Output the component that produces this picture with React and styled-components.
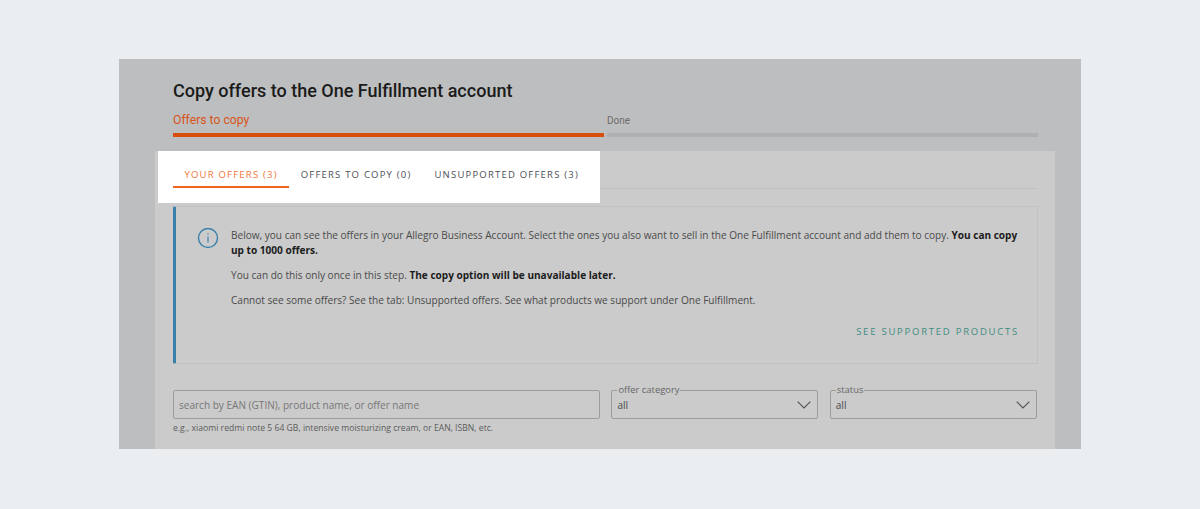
import styled, { createGlobalStyle } from 'styled-components';

const GlobalStyle = createGlobalStyle`
  html, body {
    margin: 0;
    background: #eaeef1;
  }
  * {
    box-sizing: border-box;
  }
`;

const Page = styled.div`
  width: 1200px;
  height: 509px;
  padding: 59px 119px 60px;
  overflow: hidden;
`;

const Frame = styled.div`
  width: 962px;
  height: 390px;
  padding: 19px 26px 0 36px;
  background: #bdbebf;
  overflow: hidden;
`;

const Title = styled.h1`
  margin: 0 0 0 18px;
  font: 500 18px/26px Roboto, sans-serif;
  color: #1b1b1b;
`;

const Stepper = styled.div`
  display: flex;
  gap: 3px;
  margin: 9px 17px 14px 18px;
`;

const Step = styled.div`
  flex: 1;
  border-bottom: 4px solid ${p => (p.$active ? '#d74f0a' : '#b0b0b0')};
  padding-bottom: 5px;
  font: 400 ${p => (p.$active ? '12.2px' : '10px')}/15px Roboto, sans-serif;
  color: ${p => (p.$active ? '#d9541a' : '#6d6d6d')};
`;

const Card = styled.div`
  height: 298px;
  padding: 0 17px 0 18px;
  background: #cbcbcb;
  font-family: 'Open Sans', sans-serif;
`;

const TabBar = styled.div`
  position: relative;
  display: flex;
  height: 38px;
  padding-top: 14px;
  border-bottom: 1px solid rgba(0, 0, 0, 0.06);
`;

// white spotlight laid over the dimmed page, behind the tab labels
const Spotlight = styled.div`
  position: absolute;
  top: 0;
  left: -15px;
  width: 442px;
  height: 52px;
  background: #fff;
`;

const Tab = styled.div`
  position: relative;
  height: 23px;
  padding: 3px 11.5px 0;
  margin-bottom: -1px;
  border-bottom: 2px solid ${p => (p.$active ? '#f0661f' : 'transparent')};
  font-size: 9.5px;
  line-height: 14px;
  letter-spacing: 1.21px;
  white-space: nowrap;
  color: ${p => (p.$active ? '#f2763a' : '#4c4f56')};
`;

const InfoBox = styled.div`
  display: flex;
  height: 158px;
  margin-top: 17px;
  padding: 21px 15px 0 21px;
  border: 1px solid #c1c1c1;
  border-left: 3px solid #3a80ab;
  border-radius: 2px;
`;

const InfoIcon = styled.svg`
  flex: none;
  width: 22px;
  height: 22px;
  margin: -1px 12px 0 0;
`;

const InfoBody = styled.div`
  flex: 1;
  font-size: 10.07px;
  line-height: 15px;
  color: #4a4a4a;
`;

const Para = styled.p`
  margin: 0 0 10px;
  b {
    font-weight: 700;
    color: #1c1c1c;
  }
`;

const SupportLink = styled.div`
  margin: 17px 3px 0 0;
  font-size: 9.5px;
  line-height: 14px;
  letter-spacing: 1.76px;
  text-align: right;
  color: #3e8b80;
`;

const Filters = styled.div`
  display: grid;
  grid-template-columns: 427px 207px 207px;
  column-gap: 11.4px;
  margin-top: 20px;
`;

const SearchBox = styled.div`
  height: 29px;
  margin-top: 6px;
  padding: 0 5px;
  border: 1px solid #9c9c9c;
  border-radius: 2px;
  font-size: 10.05px;
  line-height: 28px;
  color: #777;
`;

const Hint = styled.div`
  margin-top: 3px;
  font-size: 8.63px;
  line-height: 12px;
  color: #5c5c5c;
`;

const SelectBox = styled.fieldset`
  display: flex;
  align-items: center;
  justify-content: space-between;
  height: 35px;
  margin: 0;
  padding: 0 6px 4px 5px;
  border: 1px solid #9c9c9c;
  border-radius: 2px;
  font-size: 10.05px;
  color: #4a4a4a;
  legend {
    padding: 0 1px;
    font-size: 9.4px;
    line-height: 12px;
    color: #666;
  }
`;

const Caret = styled.svg`
  width: 14px;
  height: 8px;
`;

function Chevron() {
  return (
    <Caret viewBox="0 0 14 8">
      <polyline points="0.7,0.7 7,7 13.3,0.7" fill="none" stroke="#555" strokeWidth="1.2" />
    </Caret>
  );
}

const selects = [
  { label: 'offer category', value: 'all' },
  { label: 'status', value: 'all' },
];

export default function App() {
  return (
    <Page>
      <GlobalStyle />
      <Frame>
        <Title>Copy offers to the One Fulfillment account</Title>
        <Stepper>
          <Step $active>Offers to copy</Step>
          <Step>Done</Step>
        </Stepper>
        <Card>
          <TabBar>
            <Spotlight />
            <Tab $active>YOUR OFFERS (3)</Tab>
            <Tab>OFFERS TO COPY (0)</Tab>
            <Tab>UNSUPPORTED OFFERS (3)</Tab>
          </TabBar>
          <InfoBox>
            <InfoIcon viewBox="0 0 22 22">
              <circle cx="11" cy="11" r="9.5" fill="none" stroke="#3a80ab" strokeWidth="1.4" />
              <line x1="11" y1="9.5" x2="11" y2="15.5" stroke="#3a80ab" strokeWidth="1.2" />
              <line x1="11" y1="6.2" x2="11" y2="7.6" stroke="#3a80ab" strokeWidth="1.2" />
            </InfoIcon>
            <InfoBody>
              <Para>
                Below, you can see the offers in your Allegro Business Account. Select the ones you also want to sell in
                the One Fulfillment account and add them to copy. <b>You can copy up to 1000 offers.</b>
              </Para>
              <Para>
                You can do this only once in this step. <b>The copy option will be unavailable later.</b>
              </Para>
              <Para>Cannot see some offers? See the tab: Unsupported offers. See what products we support under One Fulfillment.</Para>
              <SupportLink>SEE SUPPORTED PRODUCTS</SupportLink>
            </InfoBody>
          </InfoBox>
          <Filters>
            <div>
              <SearchBox>search by EAN (GTIN), product name, or offer name</SearchBox>
              <Hint>e.g., xiaomi redmi note 5 64 GB, intensive moisturizing cream, or EAN, ISBN, etc.</Hint>
            </div>
            {selects.map(s => (
              <SelectBox key={s.label}>
                <legend>{s.label}</legend>
                <span>{s.value}</span>
                <Chevron />
              </SelectBox>
            ))}
          </Filters>
        </Card>
      </Frame>
    </Page>
  );
}
